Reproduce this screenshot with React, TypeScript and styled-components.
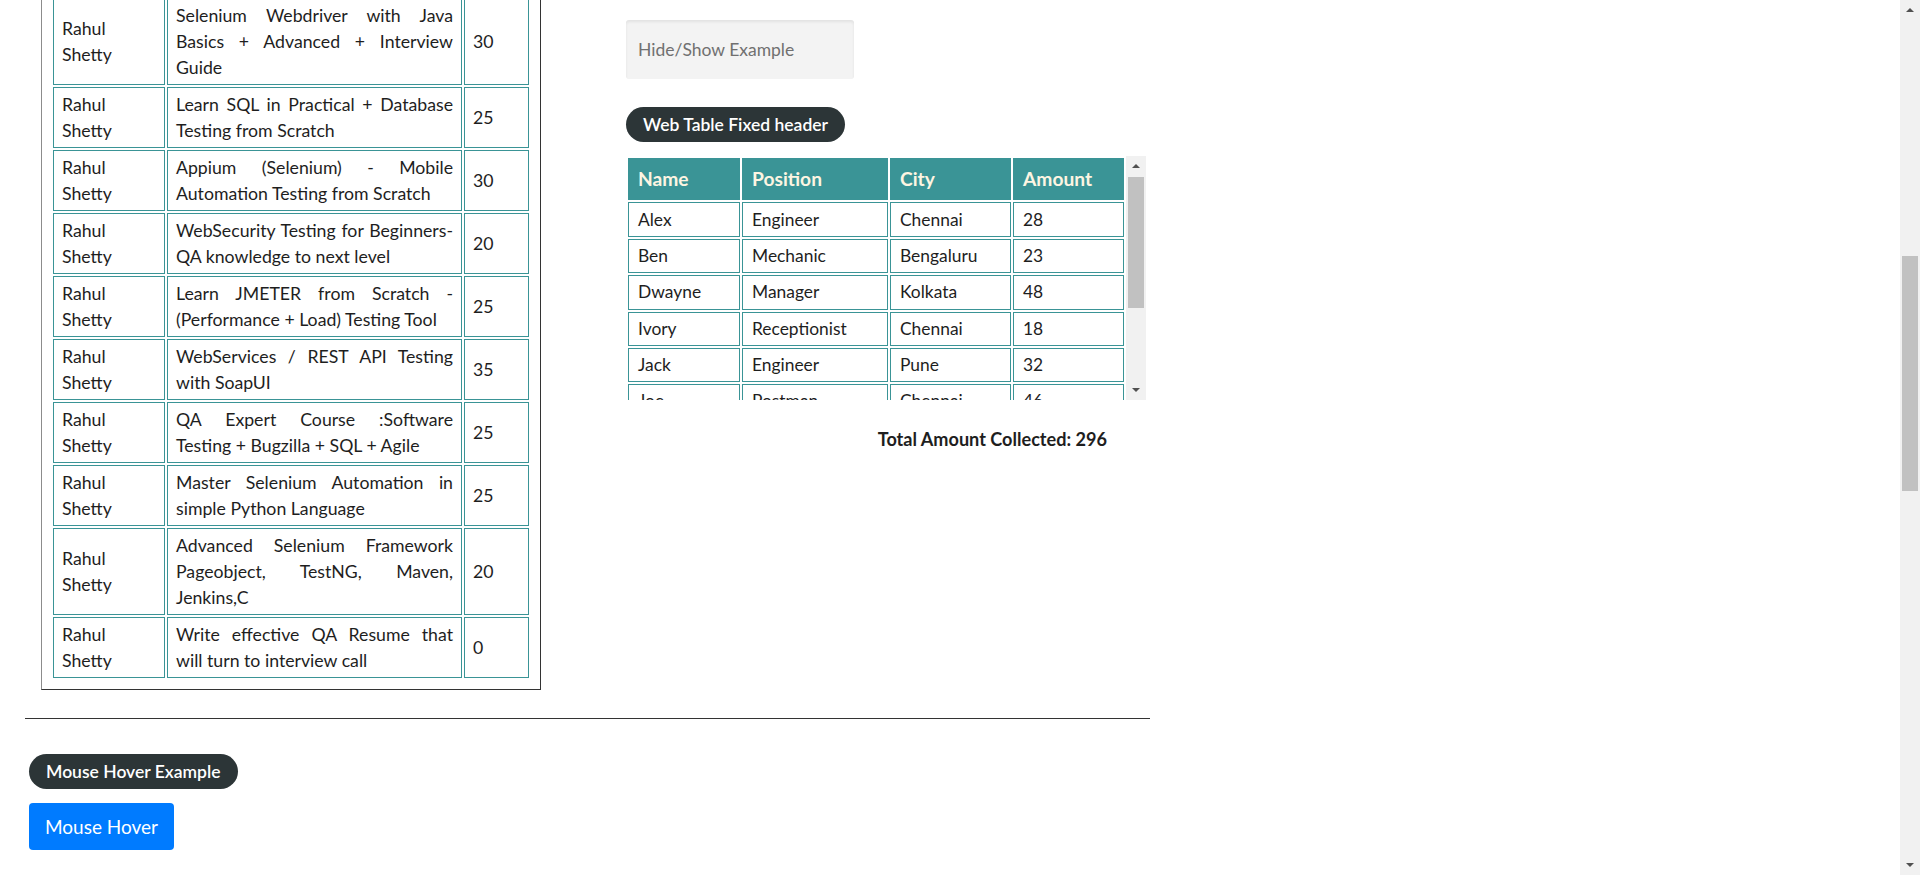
import React, { useLayoutEffect } from "react";
import styled, { createGlobalStyle } from "styled-components";

const SCROLL_TOP = 850;

const GlobalStyle = createGlobalStyle`
  html { overflow-y: scroll; scrollbar-width: none; }
  html::-webkit-scrollbar { display: none; }
  body {
    margin: 0;
    font-family: Lato, "Open Sans", sans-serif;
    color: #1e1e1e;
    background: #ffffff;
  }
  * { box-sizing: border-box; }
`;

const Page = styled.div`
  min-height: 5256px;
  padding: 765px 0 0 25px;
`;

const Main = styled.div`
  width: 1125px;
`;

const TopRow = styled.div`
  display: flex;
  align-items: flex-start;
`;

const LeftCol = styled.div`
  padding-left: 16px;
`;

const Fieldset = styled.fieldset`
  width: 500px;
  margin: 0;
  padding: 9px;
  border: 1px solid #333333;
  border-left-color: #8c8c8c;
  border-top-color: #8c8c8c;
  min-inline-size: auto;
`;

const Pill = styled.div`
  display: inline-flex;
  align-items: center;
  height: 35px;
  padding: 0 17px;
  border-radius: 18px;
  background: #2c3537;
  color: #ffffff;
  font-size: 17.5px;
  font-weight: 600;
  white-space: nowrap;
`;

const Legend = styled.legend`
  padding: 0;
  margin: 0;
`;

const CourseTable = styled.table`
  width: 100%;
  table-layout: fixed;
  border-collapse: separate;
  border-spacing: 2px;
  font-size: 17.7px;
  line-height: 26px;
`;

const HeadCell = styled.th`
  border: 1px solid #3a9496;
  padding: 3.5px 8px;
  text-align: left;
  font-weight: 700;
`;

const Cell = styled.td<{ $justify?: boolean }>`
  border: 1px solid #3a9496;
  padding: 3.5px 8px;
  vertical-align: middle;
  text-align: ${(p) => (p.$justify ? "justify" : "left")};
`;

const RightCol = styled.div`
  margin-left: 85px;
  padding-top: 105px;
  width: 520px;
`;

const TextInput = styled.input`
  display: block;
  width: 228px;
  height: 59px;
  padding: 0 12px;
  border: none;
  border-radius: 3px;
  background: #f3f3f3;
  box-shadow: inset 0 2px 3px rgba(0, 0, 0, 0.07);
  font-family: inherit;
  font-size: 17.5px;
  color: #333;
  outline: none;
  &::placeholder {
    color: #707070;
  }
`;

const SectionPill = styled(Pill)`
  margin-top: 28px;
`;

const ScrollFrame = styled.div`
  margin-top: 14px;
  display: flex;
  height: 244px;
`;

const TableViewport = styled.div`
  width: 500px;
  height: 100%;
  overflow-y: auto;
  scrollbar-width: none;
  &::-webkit-scrollbar {
    display: none;
  }
`;

const FixedTable = styled.table`
  width: 500px;
  table-layout: fixed;
  border-collapse: separate;
  border-spacing: 2px;
  font-size: 17.4px;
  line-height: 26px;
`;

const StickyHead = styled.th`
  position: sticky;
  top: 0;
  background: #3a9496;
  color: #fdf5e2;
  border: 1px solid #3a9496;
  padding: 7.2px 8px 7.2px 9px;
  text-align: left;
  font-size: 19.2px;
  font-weight: 700;
`;

const FixedCell = styled.td`
  border: 1px solid #3a9496;
  padding: 3.2px 8px 3.2px 9px;
`;

/* drawn scrollbar (the browser's own scrollbars are hidden in this view) */
const Track = styled.div<{ $height: string }>`
  flex: none;
  width: 20px;
  height: ${(p) => p.$height};
  background: #f1f1f1;
  display: flex;
  flex-direction: column;
`;

const ArrowButton = styled.div`
  flex: none;
  height: 20px;
  display: flex;
  align-items: center;
  justify-content: center;
`;

const Triangle = styled.span<{ $down?: boolean }>`
  width: 0;
  height: 0;
  border-left: 4px solid transparent;
  border-right: 4px solid transparent;
  ${(p) =>
    p.$down
      ? "border-top: 4px solid #505050;"
      : "border-bottom: 4px solid #505050;"}
`;

const Thumb = styled.div<{ $offset: number; $size: number }>`
  flex: none;
  margin: ${(p) => p.$offset}px 2px 0;
  height: ${(p) => p.$size}px;
  background: #c1c1c1;
`;

const TrackRest = styled.div`
  flex: 1;
`;

const PageBar = styled.div`
  position: fixed;
  top: 0;
  right: 0;
  z-index: 10;
`;

function Scrollbar({ height, offset, size }: { height: string; offset: number; size: number }) {
  return (
    <Track $height={height}>
      <ArrowButton>
        <Triangle />
      </ArrowButton>
      <Thumb $offset={offset} $size={size} />
      <TrackRest />
      <ArrowButton>
        <Triangle $down />
      </ArrowButton>
    </Track>
  );
}

const Total = styled.div`
  margin-top: 26px;
  padding-right: 39px;
  text-align: right;
  font-size: 18.1px;
  line-height: 26px;
  font-weight: 700;
  color: #1e1e1e;
`;

const Divider = styled.div`
  margin-top: 28px;
  border-top: 1px solid #333333;
`;

const HoverSection = styled.div`
  padding-left: 4px;
  display: flex;
  flex-direction: column;
  align-items: flex-start;
`;

const HoverPill = styled(Pill)`
  margin-top: 35px;
`;

const HoverButton = styled.button`
  margin-top: 14px;
  height: 47px;
  padding: 0 16px;
  border: none;
  border-radius: 4px;
  background: #007bff;
  color: #ffffff;
  font-family: inherit;
  font-size: 19px;
  cursor: pointer;
`;

const courses: [string, number][] = [
  ["Selenium Webdriver with Java Basics + Advanced + Interview Guide", 30],
  ["Learn SQL in Practical + Database Testing from Scratch", 25],
  ["Appium (Selenium) - Mobile Automation Testing from Scratch", 30],
  ["WebSecurity Testing for Beginners-QA knowledge to next level", 20],
  ["Learn JMETER from Scratch - (Performance + Load) Testing Tool", 25],
  ["WebServices / REST API Testing with SoapUI", 35],
  ["QA Expert Course :Software Testing + Bugzilla + SQL + Agile", 25],
  ["Master Selenium Automation in simple Python Language", 25],
  ["Advanced Selenium Framework Pageobject, TestNG, Maven, Jenkins,C", 20],
  ["Write effective QA Resume that will turn to interview call", 0],
];

const people: [string, string, string, number][] = [
  ["Alex", "Engineer", "Chennai", 28],
  ["Ben", "Mechanic", "Bengaluru", 23],
  ["Dwayne", "Manager", "Kolkata", 48],
  ["Ivory", "Receptionist", "Chennai", 18],
  ["Jack", "Engineer", "Pune", 32],
  ["Joe", "Postman", "Chennai", 46],
  ["Raymond", "Businessman", "Mumbai", 37],
  ["Ronaldo", "Sportsman", "Chennai", 31],
  ["Smith", "Cricketer", "Delhi", 33],
];

export default function App() {
  useLayoutEffect(() => {
    if ("scrollRestoration" in history) history.scrollRestoration = "manual";
    window.scrollTo(0, SCROLL_TOP);
  }, []);

  const total = people.reduce((s, p) => s + p[3], 0);

  return (
    <>
      <GlobalStyle />
      <Page>
        <Main>
          <TopRow>
            <LeftCol>
              <Fieldset>
                <Legend>
                  <Pill>Web Table Example</Pill>
                </Legend>
                <CourseTable>
                  <colgroup>
                    <col style={{ width: 112 }} />
                    <col style={{ width: 295 }} />
                    <col style={{ width: 65 }} />
                  </colgroup>
                  <thead>
                    <tr>
                      <HeadCell>Instructor</HeadCell>
                      <HeadCell>Course</HeadCell>
                      <HeadCell>Price</HeadCell>
                    </tr>
                  </thead>
                  <tbody>
                    {courses.map(([c, p], i) => (
                      <tr key={i}>
                        <Cell>Rahul Shetty</Cell>
                        <Cell $justify>{c}</Cell>
                        <Cell>{p}</Cell>
                      </tr>
                    ))}
                  </tbody>
                </CourseTable>
              </Fieldset>
            </LeftCol>
            <RightCol>
              <TextInput placeholder="Hide/Show Example" />
              <SectionPill>Web Table Fixed header</SectionPill>
              <ScrollFrame>
                <TableViewport>
                  <FixedTable>
                    <colgroup>
                      <col style={{ width: 112 }} />
                      <col style={{ width: 146 }} />
                      <col style={{ width: 121 }} />
                      <col style={{ width: 111 }} />
                    </colgroup>
                    <thead>
                      <tr>
                        <StickyHead>Name</StickyHead>
                        <StickyHead>Position</StickyHead>
                        <StickyHead>City</StickyHead>
                        <StickyHead>Amount</StickyHead>
                      </tr>
                    </thead>
                    <tbody>
                      {people.map(([n, pos, city, amt]) => (
                        <tr key={n}>
                          <FixedCell>{n}</FixedCell>
                          <FixedCell>{pos}</FixedCell>
                          <FixedCell>{city}</FixedCell>
                          <FixedCell>{amt}</FixedCell>
                        </tr>
                      ))}
                    </tbody>
                  </FixedTable>
                </TableViewport>
                <Scrollbar height="244px" offset={1} size={131} />
              </ScrollFrame>
              <Total>Total Amount Collected: {total}</Total>
            </RightCol>
          </TopRow>
          <Divider />
          <HoverSection>
            <HoverPill>Mouse Hover Example</HoverPill>
            <HoverButton>Mouse Hover</HoverButton>
          </HoverSection>
        </Main>
      </Page>
      <PageBar>
        <Scrollbar height="100vh" offset={236} size={235} />
      </PageBar>
    </>
  );
}
